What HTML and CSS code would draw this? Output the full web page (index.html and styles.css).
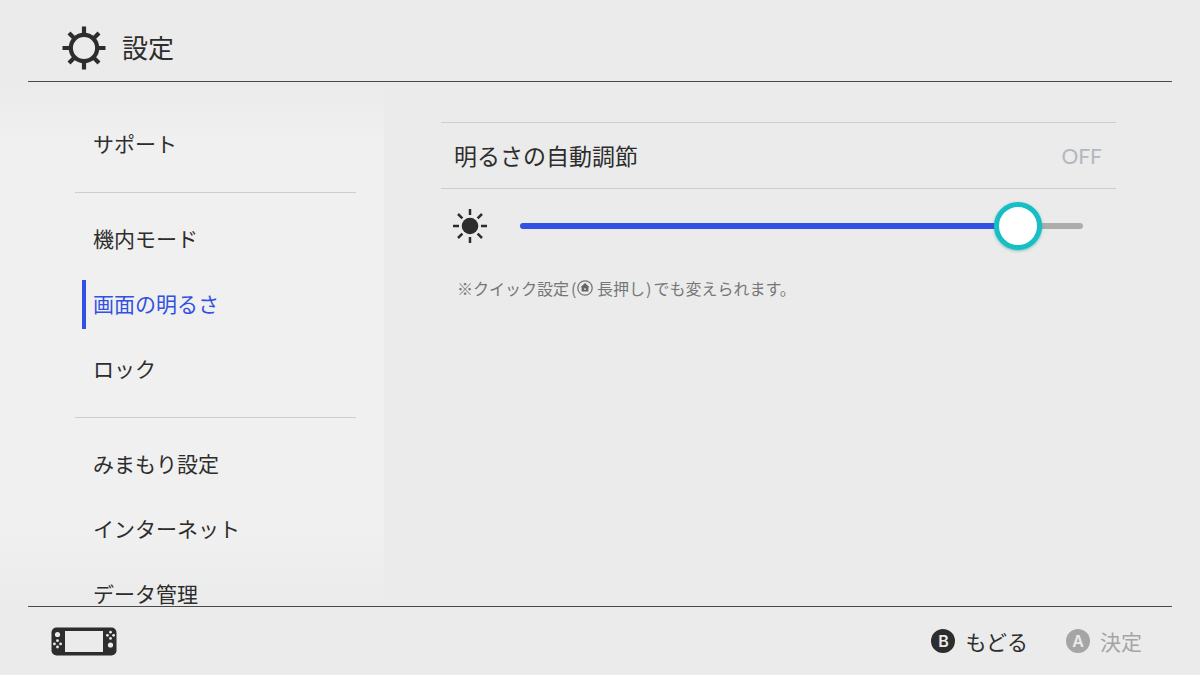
FILE: index.html
```html
<!DOCTYPE html>
<html lang="ja">
<head>
    <meta charset="UTF-8">
    <meta name="viewport" content="width=device-width, initial-scale=1.0">
    <title>設定</title>
    <link rel="stylesheet" href="styles.css">
</head>
<body>
    <header class="header">
        <svg class="gear-icon" viewBox="0 0 44 44" aria-hidden="true">
            <g fill="none" stroke="#2d2d2d" stroke-width="4.2">
                <circle cx="22" cy="22" r="13.2"/>
                <path d="M22 .5V8M22 36v7.5M.5 22H8M36 22h7.5M7 7l5 5M32 32l5 5M37 7l-5 5M12 32l-5 5"/>
            </g>
        </svg>
        <h1>設定</h1>
    </header>

    <div class="content">
        <nav class="sidebar">
            <button type="button" class="menu-item"><span>サポート</span></button>
            <hr>
            <button type="button" class="menu-item"><span>機内モード</span></button>
            <button type="button" class="menu-item active" aria-current="page"><span>画面の明るさ</span></button>
            <button type="button" class="menu-item"><span>ロック</span></button>
            <hr>
            <button type="button" class="menu-item"><span>みまもり設定</span></button>
            <button type="button" class="menu-item"><span>インターネット</span></button>
            <button type="button" class="menu-item"><span>データ管理</span></button>
        </nav>

        <main class="panel">
            <button type="button" class="setting-row">
                <span>明るさの自動調節</span>
                <span class="setting-value">OFF</span>
            </button>
            <div class="brightness">
                <svg class="sun-icon" viewBox="0 0 34 34" aria-hidden="true">
                    <circle cx="17" cy="17" r="8.3" fill="#2d2d2d"/>
                    <path d="M17 0v6M17 28v6M0 17h6M28 17h6M5 5l4.4 4.4M24.600 24.600L29 29M29 5l-4.400 4.400M9.400 24.600L5 29" fill="none" stroke="#2d2d2d" stroke-width="2.5"/>
                </svg>
                <input type="range" class="slider" min="0" max="100" value="92" aria-label="画面の明るさ">
            </div>
            <p class="note">※クイック設定<span class="paren-open">(</span><svg class="home-icon" viewBox="0 0 16 16" role="img" aria-label="HOME"><circle cx="8" cy="8" r="7.2" fill="none" stroke="#777" stroke-width="1.3"/><path d="M8 3L12.5 7.2H11.400V11.600H4.600V7.200H3.500Z" fill="#666"/><path d="M7.300 8.300h1.400v1.700H7.300z" fill="#ebebeb"/></svg> 長押し<span class="paren-close">)</span>でも変えられます。</p>
        </main>
    </div>

    <footer class="footer">
        <svg class="console-icon" viewBox="0 0 66 29" role="img" aria-label="本体">
            <rect x=".5" y=".5" width="65" height="28" rx="5" fill="#2d2d2d"/>
            <rect x="14" y="4" width="38" height="21" fill="#ebebeb"/>
            <g fill="#ebebeb">
                <circle cx="6.5" cy="7.5" r="2.6"/>
                <circle cx="59.5" cy="18" r="2.6"/>
                <circle cx="6.5" cy="13.7" r="1.4"/>
                <circle cx="6.5" cy="20" r="1.4"/>
                <circle cx="3.4" cy="16.9" r="1.4"/>
                <circle cx="9.6" cy="16.9" r="1.4"/>
                <circle cx="59.5" cy="5.2" r="1.4"/>
                <circle cx="59.5" cy="11.4" r="1.4"/>
                <circle cx="56.4" cy="8.3" r="1.4"/>
                <circle cx="62.6" cy="8.3" r="1.4"/>
            </g>
        </svg>
        <div class="actions">
            <button type="button" class="action"><span class="key">B</span>もどる</button>
            <button type="button" class="action" disabled><span class="key">A</span>決定</button>
        </div>
    </footer>
</body>
</html>
```

FILE: styles.css
```css
* {
    box-sizing: border-box;
}
body {
    display: flex;
    flex-direction: column;
    height: 100vh;
    margin: 0;
    overflow: hidden;
    background: #ebebeb;
    color: #2d2d2d;
    font-family: "Noto Sans CJK JP", sans-serif;
}
button {
    padding: 0;
    border: none;
    background: none;
    color: inherit;
    font-family: inherit;
    cursor: pointer;
}
svg {
    display: block;
    flex: none;
}

/* Header */
.header {
    display: flex;
    align-items: center;
    gap: 16px;
    margin: 0 28px;
    padding: 14px 34px 0;
    height: 82px;
    border-bottom: 1px solid #4a4a4a;
}
.header h1 {
    margin: 0;
    padding-bottom: 2px;
    font-size: 26px;
    font-weight: 400;
    line-height: 40px;
}
.gear-icon {
    width: 44px;
    height: 44px;
}

/* Content */
.content {
    display: flex;
    flex: 1;
    min-height: 0;
}
.sidebar {
    width: 32%;
    padding: 30px 28px 0 75px;
    overflow: hidden;
    background: linear-gradient(#ebebeb, #f0f0f0 12%, #f0f0f0 86%, #ebebeb);
}
.sidebar hr {
    margin: 15px 0 14px;
    border: none;
    border-top: 1px solid #cdcdcd;
}
.menu-item {
    display: flex;
    align-items: center;
    width: 100%;
    height: 65px;
    padding-left: 7px;
    font-size: 21px;
    line-height: 24px;
}
.menu-item::before {
    content: "";
    width: 4px;
    height: 49px;
    margin-right: 7px;
}
.menu-item span {
    padding-bottom: 4px;
}
.menu-item.active {
    color: #3250e4;
}
.menu-item.active::before {
    background: #3250e4;
}

.panel {
    flex: 1;
    padding: 40px 84px 0 57px;
}
.setting-row {
    display: flex;
    align-items: center;
    justify-content: space-between;
    width: 100%;
    height: 67px;
    padding: 0 14px 2px 13px;
    border-top: 1px solid #cdcdcd;
    border-bottom: 1px solid #cdcdcd;
    font-size: 23px;
}
.setting-value {
    padding-top: 2px;
    color: #b3b7c0;
    font-family: Lato, sans-serif;
    font-size: 21px;
}
.brightness {
    display: flex;
    align-items: center;
    gap: 33px;
    height: 74px;
    padding: 0 33px 0 12px;
}
.sun-icon {
    width: 34px;
    height: 34px;
}
.slider {
    flex: 1;
    min-width: 0;
    height: 48px;
    margin: 0;
    background: none;
    -webkit-appearance: none;
    appearance: none;
    cursor: pointer;
}
.slider::-webkit-slider-runnable-track {
    height: 6px;
    border-radius: 3px;
    background: linear-gradient(to right, #3250e4 88%, #adadad 88%);
}
.slider::-webkit-slider-thumb {
    width: 48px;
    height: 48px;
    margin-top: -21px;
    border: 5px solid #17bfc4;
    border-radius: 50%;
    background: #fff;
    box-shadow: 0 1px 3px rgba(0, 150, 140, 0.5);
    -webkit-appearance: none;
    appearance: none;
}
.note {
    display: flex;
    align-items: center;
    margin: 13px 0 0;
    padding-left: 16px;
    color: #777;
    font-size: 16px;
    line-height: 24px;
    white-space: pre;
}
.paren-open {
    margin: 0 1px 0 2px;
}
.paren-close {
    margin: 0 2px 0 1px;
}
.home-icon {
    width: 16px;
    height: 16px;
}

/* Footer */
.footer {
    display: flex;
    align-items: center;
    justify-content: space-between;
    height: 69px;
    margin: 0 28px;
    padding: 0 30px 0 23px;
    border-top: 1px solid #4a4a4a;
}
.console-icon {
    width: 66px;
    height: 29px;
}
.actions {
    display: flex;
    gap: 38px;
}
.action {
    display: flex;
    align-items: center;
    gap: 10px;
    font-size: 21px;
    line-height: 28px;
}
.action:disabled {
    color: #a5a5a5;
    cursor: default;
}
.key {
    width: 24px;
    height: 24px;
    border-radius: 50%;
    background: #2d2d2d;
    color: #ebebeb;
    font-family: Inter, sans-serif;
    font-size: 16px;
    font-weight: 600;
    line-height: 24px;
    text-align: center;
}
.action:disabled .key {
    background: #a5a5a5;
}
```
